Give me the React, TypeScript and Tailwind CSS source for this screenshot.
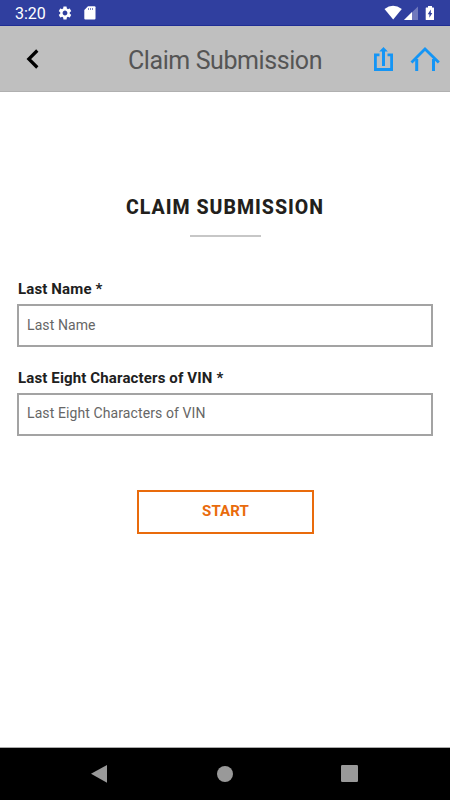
import React from 'react';
import { MdSettings } from 'react-icons/md';

function StatusBar() {
  return (
    <div className="flex h-[26px] items-center border-b border-[#1f2d94] bg-[#303f9f] text-white">
      <span className="ml-[15px] w-[42px] pt-[2px] text-[16px] leading-[24px]">3:20</span>
      <MdSettings className="mt-px h-4 w-4" />
      <svg className="ml-[11px] mt-px h-[14px] w-[12px]" viewBox="0 0 12 14">
        <path d="M4 .2H10.5Q11.5 .2 11.5 1.2V12.5Q11.5 13.5 10.5 13.5H1.3Q.3 13.5 .3 12.5V4Z" fill="white" />
        <path d="M4.5 2V4M6.5 2V4M8.5 2V4" stroke="#7f89c6" strokeWidth="1" />
      </svg>
      <svg className="ml-auto mr-[11px] h-[26px] w-[56px]" viewBox="0 0 56 26">
        <path d="M1.5 9Q10 2.5 18.8 9L10.2 19.5Z" fill="white" />
        <path d="M35 6.5V20H21Z" fill="#7079bd" />
        <path d="M29 12V20H21Z" fill="white" />
        <path d="M43.2 7.5H45V6H49V7.5H50.5Q51 7.5 51 8.2V19.5Q51 20 50.5 20H43.2Q42.7 20 42.7 19.5V8Q42.7 7.5 43.2 7.5Z" fill="white" />
        <path d="M47.8 9.5L44.7 14.2H46.4V17.8L49.3 13H47.8Z" fill="#303f9f" />
      </svg>
    </div>
  );
}

function Header() {
  return (
    <header className="flex h-[66px] items-center border-b border-[#b0b0b0] bg-[#bfbfbf]">
      <svg className="ml-[24px] h-6 w-6" viewBox="0 0 24 24" fill="none" stroke="black" strokeWidth="3.2">
        <path d="M13.3 3.5L4.8 12L13.3 20.5" />
      </svg>
      <h1 className="ml-[80px] whitespace-nowrap pt-[5px] text-[25px] font-normal leading-[30px] tracking-[-0.42px] text-[#555]">Claim Submission</h1>
      <svg className="ml-auto mr-[10px] h-[30px] w-[70px]" viewBox="0 0 70 30" fill="none" stroke="#1495f5">
        <path d="M9.5 10.8H5.4V25.5H21.6V10.8H17.5" strokeWidth="2.8" />
        <path d="M13.5 22V6" strokeWidth="3" />
        <path d="M9.2 7.6L13.5 3L17.8 7.6Z" fill="#1495f5" stroke="none" />
        <path d="M41.5 18.6L55 5L68.8 18.6" strokeWidth="2.8" />
        <path d="M46.7 15V27M63.5 15V27" strokeWidth="3" />
      </svg>
    </header>
  );
}

function Field({ label, placeholder, className }: { label: string; placeholder: string; className: string }) {
  return (
    <label className={'block ' + className}>
      <span className="block pl-px text-[15px] font-bold leading-[20px] tracking-[0.14px] text-[#202020]">{label}</span>
      <input
        type="text"
        placeholder={placeholder}
        className="mt-[5px] block h-[43px] w-full border-2 border-[#a3a3a3] bg-white px-[8px] text-[14px] tracking-[0.1px] placeholder:text-[#666]"
      />
    </label>
  );
}

function NavigationBar() {
  return (
    <nav className="flex h-[53px] items-center justify-between border-t border-[#aaa] bg-black pl-[90px] pr-[92px]">
      <svg className="h-5 w-[18px]" viewBox="0 0 18 20" fill="#999"><path d="M1 9.7L17 1V18.7Z" /></svg>
      <svg className="-mt-px h-4 w-4" viewBox="0 0 16 16" fill="#999"><circle cx="8" cy="8" r="8" /></svg>
      <svg className="-mt-px h-[17px] w-[17px]" viewBox="0 0 17 17" fill="#999"><rect width="17" height="17" rx="1.2" /></svg>
    </nav>
  );
}

export default function App() {
  return (
    <div className="flex h-[800px] w-[450px] flex-col overflow-hidden bg-white font-['Roboto',sans-serif]">
      <StatusBar />
      <Header />
      <main className="flex flex-1 flex-col pl-[17px] pr-[17px] pt-[102px]">
        <h2 className="pt-px text-center text-[19.5px] font-extrabold leading-[26px] tracking-[1px] text-[#231f1c]">CLAIM SUBMISSION</h2>
        <div className="ml-[173px] mt-[14px] h-[2px] w-[71px] bg-[#c7c7c7]" />
        <Field className="mt-[42px] [&>input]:pb-[2px]" label="Last Name *" placeholder="Last Name" />
        <Field className="mt-[21px] [&>input]:pb-[3px]" label="Last Eight Characters of VIN *" placeholder="Last Eight Characters of VIN" />
        <button className="ml-[120px] mt-[54px] h-[44px] w-[177px] border-2 border-[#e96b0c] bg-white pb-[2px] text-[15px] font-bold tracking-[0.1px] text-[#e96b0c]">START</button>
      </main>
      <NavigationBar />
    </div>
  );
}
